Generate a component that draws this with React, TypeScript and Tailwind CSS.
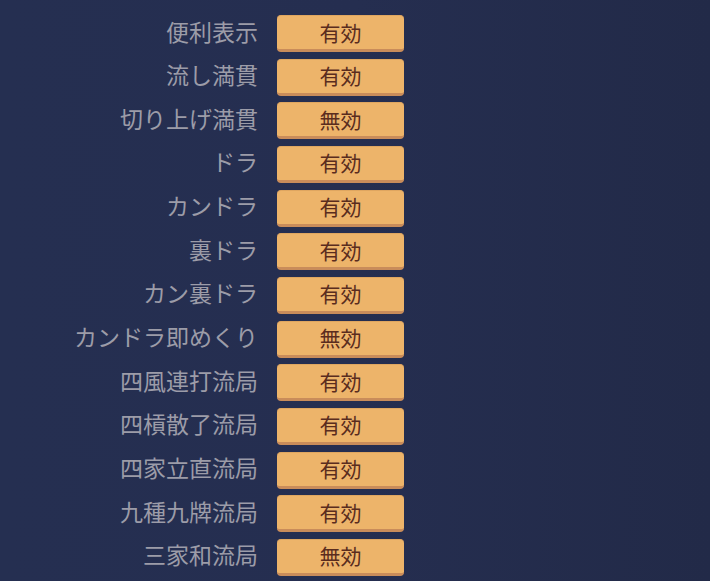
const rows: [string, boolean][] = [
  ["便利表示", true],
  ["流し満貫", true],
  ["切り上げ満貫", false],
  ["ドラ", true],
  ["カンドラ", true],
  ["裏ドラ", true],
  ["カン裏ドラ", true],
  ["カンドラ即めくり", false],
  ["四風連打流局", true],
  ["四槓散了流局", true],
  ["四家立直流局", true],
  ["九種九牌流局", true],
  ["三家和流局", false],
];

export default function App() {
  return (
    <div
      className="h-[581px] w-[710px] overflow-hidden bg-gradient-to-r from-[#252f51] via-[#252e50] to-[#222a48] pt-[15px]"
      style={{ fontFamily: '"Noto Sans CJK JP", "Noto Sans", sans-serif' }}
    >
      <div className="flex flex-col gap-[6.67px]">
        {rows.map(([label, on]) => (
          <div key={label} className="flex h-[37px] items-center gap-[19px]">
            <div className="w-[258px] pb-[5px] text-right text-[23px] leading-none text-[#9c9ca8]">{label}</div>
            <button className="flex h-[37px] w-[127px] items-center justify-center rounded-[4px] border-t border-b-[3px] border-t-[#dfa660] border-b-[#c98c5a] bg-[#edb46a] pb-[1px] text-[21px] leading-none text-[#5a2c1e]">
              {on ? "有効" : "無効"}
            </button>
          </div>
        ))}
      </div>
    </div>
  );
}
